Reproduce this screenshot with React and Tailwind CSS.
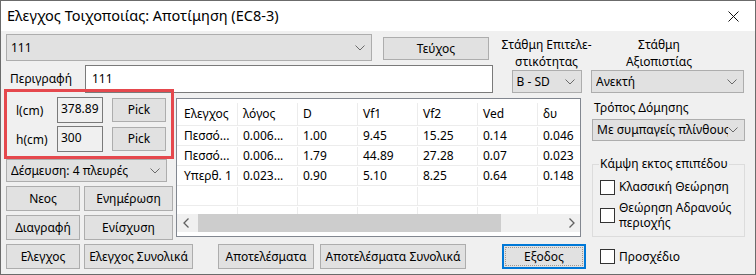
import React from "react";

const Chevron = () => (
  <svg width="10" height="6" viewBox="0 0 10 6" className="shrink-0">
    <path d="M0.5 0.5 L5 5 L9.5 0.5" fill="none" stroke="#6a6a6a" strokeWidth="1" />
  </svg>
);

function Combo({ text, className }) {
  return (
    <div
      className={
        "flex items-center justify-between border border-[#adadad] bg-[#e1e1e1] pl-[4px] pr-[6px] overflow-hidden whitespace-nowrap " +
        className
      }
    >
      <span className="overflow-hidden">{text}</span>
      <Chevron />
    </div>
  );
}

function Btn({ children, className }) {
  return (
    <div
      className={
        "flex items-center justify-center border border-[#adadad] bg-[#e1e1e1] whitespace-nowrap shrink-0 " +
        className
      }
    >
      {children}
    </div>
  );
}

const Check = () => <div className="w-[15px] h-[15px] border border-[#333333] bg-white shrink-0" />;

const cols = ["Ελεγχος", "λόγος", "D", "Vf1", "Vf2", "Ved", "δυ"];
const rows = [
  ["Πεσσό...", "0.006...", "1.00", "9.45", "15.25", "0.14", "0.046"],
  ["Πεσσό...", "0.006...", "1.79", "44.89", "27.28", "0.07", "0.023"],
  ["Υπερθ. 1", "0.023...", "0.90", "5.10", "8.25", "0.64", "0.148"],
  ["", "", "", "", "", "", ""],
  ["", "", "", "", "", "", ""],
];

function Row({ cells, header }) {
  return (
    <div className={"flex shrink-0 border-b border-[#ececec] " + (header ? "h-[27px] pt-[4px]" : "h-[20px] pt-[1px]")}>
      {cells.map((c, i) => (
        <div
          key={i}
          className={
            "flex items-center shrink-0 border-r border-[#ececec] whitespace-nowrap overflow-hidden " +
            (i === 0 ? "w-[61px] pl-[7px]" : "w-[60px] pl-[5px]")
          }
        >
          {c}
        </div>
      ))}
    </div>
  );
}

export default function App() {
  return (
    <div className="relative w-[756px] h-[275px] flex flex-col border border-[#6b6b6b] overflow-hidden font-['Noto_Sans',sans-serif] text-[12px] text-black">
      {/* title bar */}
      <div className="h-[30px] shrink-0 bg-white flex items-center justify-between pl-[6px] pr-[16px]">
        <span className="text-[14.5px]">Ελεγχος Τοιχοποιίας: Αποτίμηση (EC8-3)</span>
        <svg width="11" height="11" viewBox="0 0 11 11">
          <path d="M0.5 0.5 L10.5 10.5 M10.5 0.5 L0.5 10.5" stroke="#111" strokeWidth="1" fill="none" />
        </svg>
      </div>

      {/* body */}
      <div className="flex-1 bg-[#f0f0f0] pl-[5px] flex flex-col">
        {/* top area */}
        <div className="flex mt-[3px] h-[59px] shrink-0">
          <div className="flex flex-col w-[487px]">
            <div className="flex items-start">
              <Combo text="111" className="w-[366px] h-[27px]" />
              <Btn className="ml-[11px] mt-[3px] w-[106px] h-[23px]">Τεύχος</Btn>
            </div>
            <div className="flex items-center mt-[4px]">
              <div className="w-[79px] pl-[4px]">Περιγραφή</div>
              <div className="w-[408px] h-[28px] bg-white border border-[#7a7a7a] flex items-center pl-[6px]">111</div>
            </div>
          </div>
          <div className="flex ml-[9px] mt-[2px]">
            <div className="w-[89px] flex flex-col items-center">
              <div className="h-[34px] text-center leading-[17px] whitespace-nowrap">
                Στάθμη Επιτελε-
                <br />
                στικότητας
              </div>
              <Combo text="B - SD" className="w-[70px] h-[23px]" />
            </div>
            <div className="w-[154px] flex flex-col">
              <div className="w-[136px] h-[34px] text-center leading-[17px] whitespace-nowrap">
                Στάθμη
                <br />
                Αξιοπιστίας
              </div>
              <Combo text="Ανεκτή" className="w-[153px] h-[23px]" />
            </div>
          </div>
        </div>

        {/* middle */}
        <div className="flex h-[147px] shrink-0">
          {/* left column */}
          <div className="w-[167px] flex flex-col shrink-0">
            <div className="flex items-center mt-[4px] h-[26px]">
              <div className="w-[51px] pl-[10px] pt-[2px]">l(cm)</div>
              <div className="w-[46px] h-[26px] border border-[#7a7a7a] bg-[#f0f0f0] pl-[3px] pt-[1px] leading-[20px]">378.89</div>
              <Btn className="ml-[9px] w-[54px] h-[24px]">Pick</Btn>
            </div>
            <div className="flex items-center mt-[3px] h-[26px]">
              <div className="w-[51px] pl-[10px] pt-[2px]">h(cm)</div>
              <div className="w-[46px] h-[26px] border border-[#7a7a7a] bg-[#f0f0f0] pl-[3px] pt-[1px] leading-[20px]">300</div>
              <Btn className="ml-[9px] w-[54px] h-[24px]">Pick</Btn>
            </div>
            <Combo text="Δέσμευση: 4 πλευρές" className="mt-[7px] w-[161px] h-[23px]" />
            <div className="flex mt-[4px]">
              <Btn className="w-[74px] h-[25px]">Νεος</Btn>
              <Btn className="ml-[4px] w-[89px] h-[25px]">Ενημέρωση</Btn>
            </div>
            <div className="flex mt-[4px]">
              <Btn className="w-[74px] h-[25px]">Διαγραφή</Btn>
              <Btn className="ml-[4px] w-[89px] h-[25px]">Ενίσχυση</Btn>
            </div>
          </div>

          {/* table */}
          <div className="ml-[3px] mt-[5px] w-[405px] h-[139px] border border-[#828790] bg-white flex flex-col shrink-0 overflow-hidden">
            <div className="flex-1 flex flex-col overflow-hidden">
              <Row cells={cols} header />
              {rows.map((r, i) => (
                <Row key={i} cells={r} />
              ))}
            </div>
            <div className="h-[18px] shrink-0 bg-[#f0f0f0] flex items-center">
              <div className="w-[17px] h-full flex items-center justify-center">
                <svg width="6" height="10" viewBox="0 0 6 10">
                  <path d="M5.5 0.5 L1 5 L5.5 9.5" fill="none" stroke="#606060" strokeWidth="1.3" />
                </svg>
              </div>
              <div className="ml-[4px] w-[303px] h-full bg-[#cdcdcd]" />
              <div className="flex-1" />
              <div className="w-[17px] h-full flex items-center justify-center">
                <svg width="6" height="10" viewBox="0 0 6 10">
                  <path d="M0.5 0.5 L5 5 L0.5 9.5" fill="none" stroke="#606060" strokeWidth="1.3" />
                </svg>
              </div>
            </div>
            <div className="h-[4px] shrink-0" />
          </div>

          {/* right column */}
          <div className="ml-[11px] w-[153px] flex flex-col shrink-0">
            <div className="mt-[7px] pl-[2px] leading-[16px]">Τρόπος Δόμησης</div>
            <Combo text="Με συμπαγείς πλίνθους" className="mt-[3px] w-[153px] h-[22px]" />
            <fieldset className="mt-[15px] h-[81px] border border-[#dcdcdc] pl-[7px] pr-[2px]">
              <legend className="leading-[16px] px-[1px] -ml-[1px]">Κάμψη εκτος επιπέδου</legend>
              <div className="flex items-center mt-[7px]">
                <Check />
                <span className="ml-[4px] leading-[16px] whitespace-nowrap">Κλασσική Θεώρηση</span>
              </div>
              <div className="flex items-center mt-[5px]">
                <Check />
                <span className="ml-[4px] leading-[15px] whitespace-nowrap">
                  Θεώρηση Αδρανούς
                  <br />
                  περιοχής
                </span>
              </div>
            </fieldset>
          </div>
        </div>

        {/* bottom row */}
        <div className="flex items-center mt-[4px] h-[25px] shrink-0">
          <Btn className="w-[74px] h-[25px]">Ελεγχος</Btn>
          <Btn className="ml-[4px] w-[109px] h-[25px]">Ελεγχος Συνολικά</Btn>
          <Btn className="ml-[25px] w-[96px] h-[25px]">Αποτελέσματα</Btn>
          <Btn className="ml-[6px] w-[146px] h-[25px]">Αποτελέσματα Συνολικά</Btn>
          <div className="ml-[36px] w-[84px] h-[25px] border-2 border-[#0078d7] bg-[#e1e1e1] p-[1px] shrink-0">
            <div className="w-full h-full border border-dotted border-[#a09890] flex items-center justify-center">Εξοδος</div>
          </div>
          <div className="ml-[14px]">
            <Check />
          </div>
          <span className="ml-[4px]">Προσχέδιο</span>
        </div>
      </div>

      {/* red annotation overlay */}
      <div className="absolute left-[3px] top-[88px] w-[170px] h-[70px] border-[3px] border-[#e5484d] pointer-events-none" />
    </div>
  );
}
